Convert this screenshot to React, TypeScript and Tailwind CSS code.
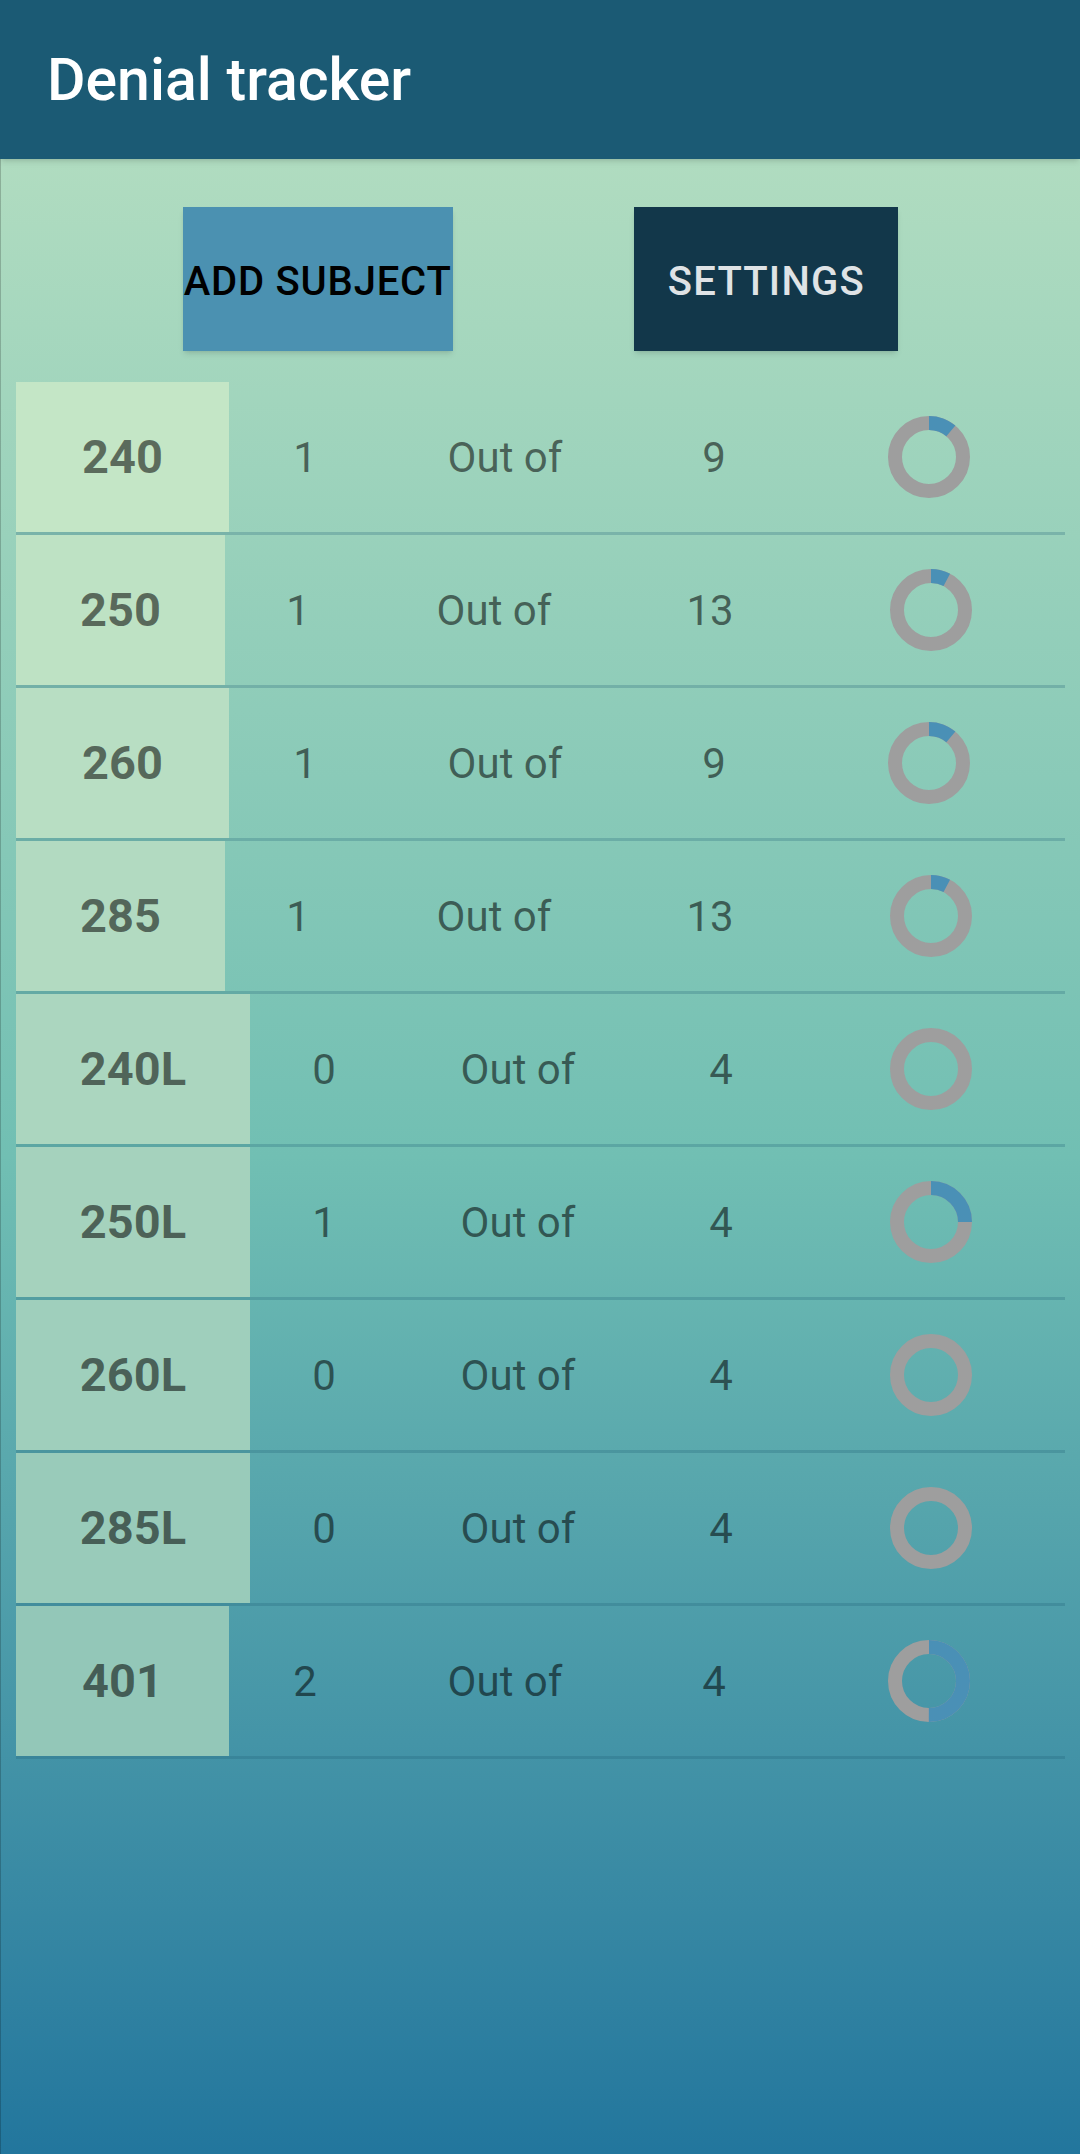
import React from "react";

type Row = {
  code: string;
  done: number;
  total: number;
  layout: "a" | "b" | "c";
  bg: string;
};

const rows: Row[] = [
  { code: "240", done: 1, total: 9, layout: "a", bg: "bg-[#c4e6c6]" },
  { code: "250", done: 1, total: 13, layout: "b", bg: "bg-[#bee2c4]" },
  { code: "260", done: 1, total: 9, layout: "a", bg: "bg-[#b8dec3]" },
  { code: "285", done: 1, total: 13, layout: "b", bg: "bg-[#b2dac1]" },
  { code: "240L", done: 0, total: 4, layout: "c", bg: "bg-[#abd6bf]" },
  { code: "250L", done: 1, total: 4, layout: "c", bg: "bg-[#a5d2bd]" },
  { code: "260L", done: 0, total: 4, layout: "c", bg: "bg-[#9fcfbc]" },
  { code: "285L", done: 0, total: 4, layout: "c", bg: "bg-[#99cbba]" },
  { code: "401", done: 2, total: 4, layout: "a", bg: "bg-[#93c7b8]" },
];

const layouts = {
  a: ["w-[213px]", "w-[152px]", "w-[248px]", "w-[170px]", "w-[260px]"],
  b: ["w-[209px]", "w-[146px]", "w-[246px]", "w-[186px]", "w-[256px]"],
  c: ["w-[234px]", "w-[148px]", "w-[240px]", "w-[166px]", "w-[254px]"],
};

const Donut = ({ done, total }: { done: number; total: number }) => {
  const r = 34;
  const circ = 2 * Math.PI * r;
  const part = (done / total) * circ;
  return (
    <svg width="84" height="84" viewBox="0 0 84 84">
      <circle cx="42" cy="42" r={r} fill="none" stroke="#9e9e9e" strokeWidth="14" />
      {done > 0 && (
        <circle
          cx="42"
          cy="42"
          r={r}
          fill="none"
          stroke="#4a90b6"
          strokeWidth="14"
          strokeDasharray={`${part} ${circ}`}
          transform="rotate(-90 42 42)"
        />
      )}
    </svg>
  );
};

const SubjectRow = ({ row }: { row: Row }) => {
  const w = layouts[row.layout];
  return (
    <div>
      <div className="flex h-[150px] items-center text-black/[0.54]">
        <div className={`${w[0]} ${row.bg} h-full flex items-center justify-center text-[47px] font-bold`}>
          {row.code}
        </div>
        <div className={`${w[1]} text-center text-[42px]`}>{row.done}</div>
        <div className={`${w[2]} text-center text-[42px]`}>Out of</div>
        <div className={`${w[3]} text-center text-[42px]`}>{row.total}</div>
        <div className={`${w[4]} flex justify-center`}>
          <Donut done={row.done} total={row.total} />
        </div>
      </div>
      <div className="h-[3px] bg-[#1b5a74]/25" />
    </div>
  );
};

export default function App() {
  return (
    <div className="w-[1080px] h-[2154px] flex flex-col font-['Roboto',sans-serif]">
      <header className="h-[159px] shrink-0 bg-[#1b5a74] flex items-center pl-[47px] pt-[2px] shadow-md z-10">
        <h1 className="text-white text-[59px] font-medium">Denial tracker</h1>
      </header>
      <main className="flex-1 bg-linear-to-b from-[#b0dcc0] via-[#71bfb3] to-[#22769d] border-l border-black/20">
        <div className="flex justify-evenly mt-[48px]">
          <button className="w-[270px] h-[144px] pt-[5px] bg-[#4b91b1] text-black text-[40px] font-medium tracking-[0.02em] whitespace-nowrap shadow-md flex items-center justify-center">
            ADD SUBJECT
          </button>
          <button className="w-[264px] h-[144px] pt-[5px] bg-[#12374a] text-[#dfe3e6] text-[40px] font-medium tracking-[0.03em] shadow-md flex items-center justify-center">
            SETTINGS
          </button>
        </div>
        <div className="mt-[31px] px-[15px]">
          {rows.map((row) => (
            <SubjectRow key={row.code} row={row} />
          ))}
        </div>
      </main>
    </div>
  );
}
